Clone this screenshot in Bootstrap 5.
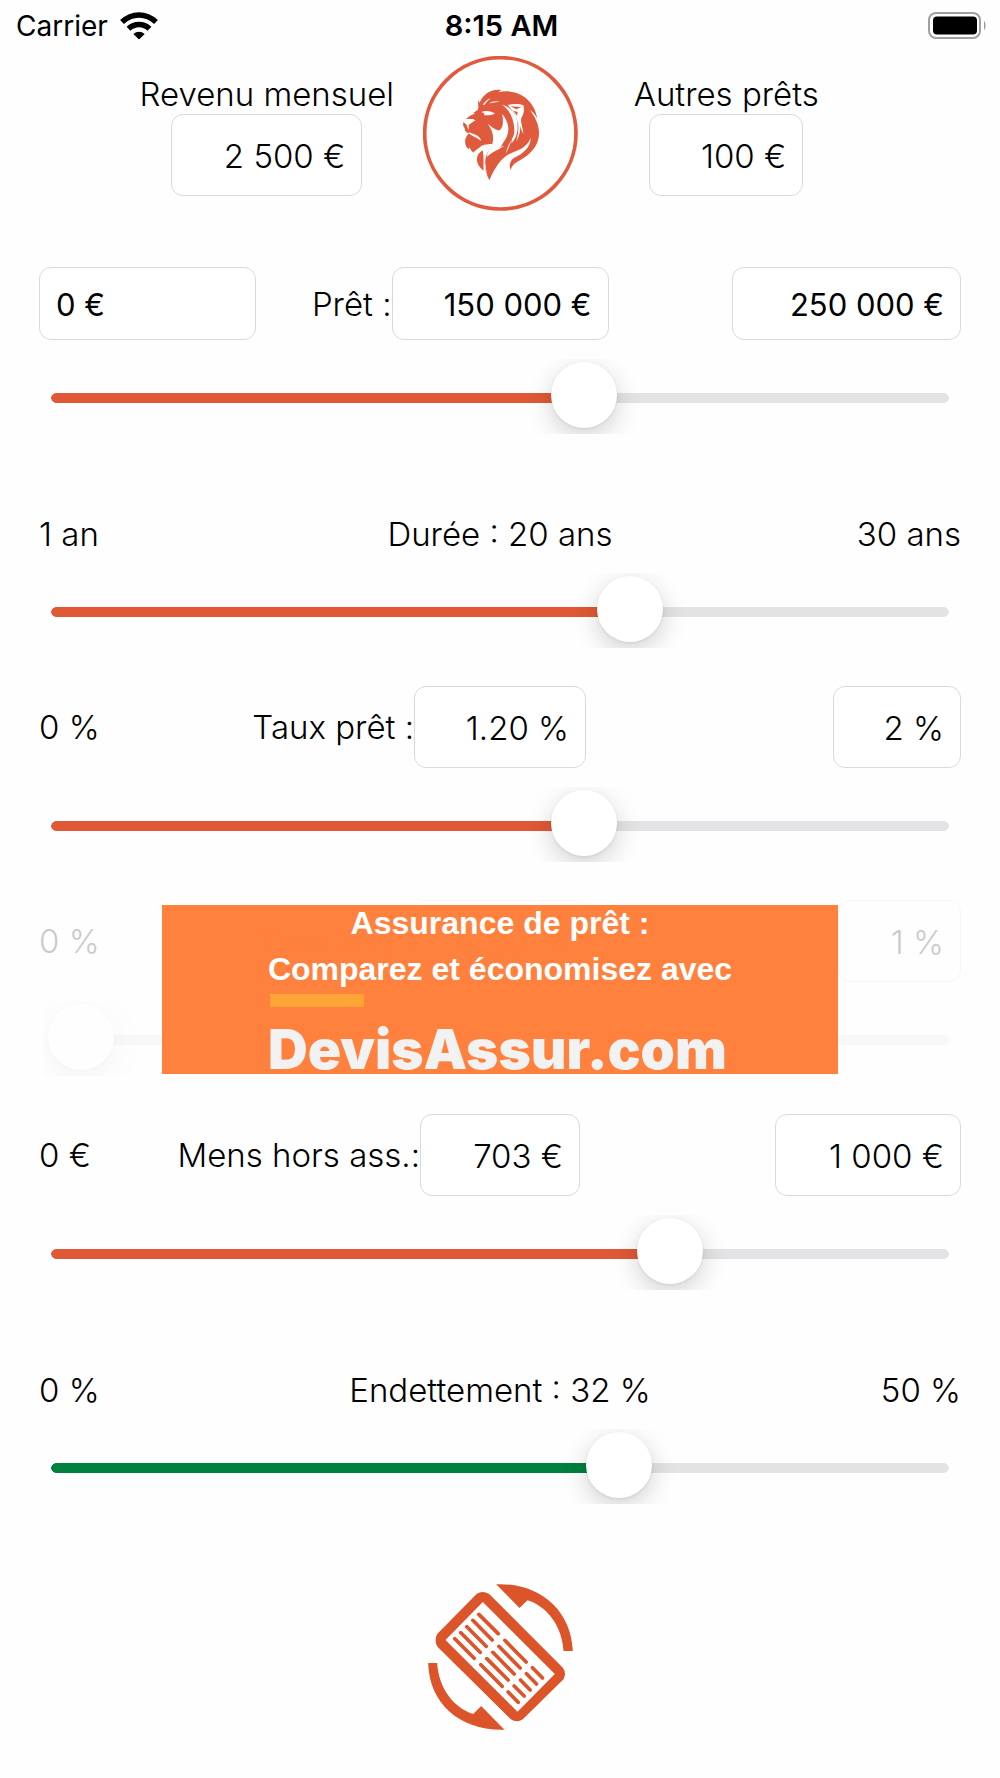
<!DOCTYPE html>
<html lang="fr">
<head>
<meta charset="utf-8">
<meta name="viewport" content="width=device-width, initial-scale=1">
<title>Simulateur de prêt</title>
<link href="https://cdn.jsdelivr.net/npm/bootstrap@5.3.0/dist/css/bootstrap.min.css" rel="stylesheet">
<style>
  :root { --brand: #e05835; --rail: #e3e3e5; }
  body { font-family: Inter, "Liberation Sans", sans-serif; font-size: 33px; font-weight: 300; line-height: 40px; color: #000; background: #fefefe; }
  .status-bar { height: 56px; padding: 6px 13px 10px 16px; font-size: 29px; font-weight: 400; }
  .status-bar time { font-weight: 600; }
  .carrier { font-size: 28px; }
  .three-cols { display: grid; grid-template-columns: 1fr auto 1fr; align-items: center; }
  .top-area { padding-bottom: 9px; }
  .income { padding: 2px 0 0 111px; }
  .others { padding: 2px 125px 0 0; }
  .money { height: 82px; padding: 2px 16px 0; border: 1px solid #dadada; border-radius: 12px; font-size: 33px; font-weight: 300; color: #000; background: #fff; text-align: right; }
  .money:disabled { background: #fff; color: #000; }
  .money-main { height: 73px; font-size: 31px; font-weight: 400; }
  .size-xs { width: 123px; } .size-s { width: 128px; } .size-m { width: 154px; } .size-l { width: 160px; }
  .size-xl { width: 172px; } .size-2xl { width: 186px; } .size-wide { width: 191px; } .size-3xl { width: 217px; } .size-4xl { width: 229px; }
  .setting { min-height: 214px; gap: 19px; }
  .setting .three-cols { padding: 0 39px; }
  .faded { opacity: .2; }
  .slide-box { height: 75px; margin: 0 44px; padding: 0 4px; overflow: hidden; }
  .slide { -webkit-appearance: none; appearance: none; display: block; width: 100%; height: 78px; margin: 0; background: transparent; --tint: var(--brand); }
  .slide-ok { --tint: #00813f; }
  .slide-zero { --tint: var(--rail); }
  .slide::-webkit-slider-runnable-track { height: 10px;
    background:
      linear-gradient(90deg, var(--tint) var(--fill), var(--rail) var(--fill)) 8px 0 / calc(100% - 16px) 10px no-repeat,
      radial-gradient(circle at center, var(--tint) 4.5px, transparent 5px) 3px 0 / 10px 10px no-repeat,
      radial-gradient(circle at center, var(--rail) 4.5px, transparent 5px) calc(100% - 3px) 0 / 10px 10px no-repeat; }
  .slide::-webkit-slider-thumb { -webkit-appearance: none; width: 66px; height: 66px; margin-top: -31px; border: 0; border-radius: 50%; background: #fff; box-shadow: 0 8px 26px rgba(0,0,0,.18), 0 1px 3px rgba(0,0,0,.08); }
  .ad { top: 43px; left: 50%; width: 676px; max-width: 100%; height: 169px; transform: translateX(-50%); background: rgba(255,127,58,.985); color: #fff; text-decoration: none; font: bold 32px/36px "Liberation Sans", Arial, sans-serif; overflow: hidden; }
  .ad:hover { color: #fff; }
  .ad-copy { width: 464px; }
  .ad-lines { gap: 10px; }
  .ad-bar { width: 94px; height: 13px; margin: 7px 0 0 2px; background: #ffa535; }
  .ad-name { font: 900 55px/50px Inter, sans-serif; color: #f2f2f2; margin-top: 17px; }
  .flip { margin-top: 80px; }
</style>
<script src="https://cdn.jsdelivr.net/npm/bootstrap@5.3.0/dist/js/bootstrap.bundle.min.js"></script>
</head>
<body>
<div class="status-bar three-cols">
  <div class="d-flex align-items-center gap-2">
    <span class="carrier">Carrier</span>
    <svg class="ms-1" width="38" height="28" viewBox="0 0 38 28" role="img" aria-label="Wi-Fi"><g fill="none" stroke="#000" stroke-width="5.500"><path d="M2 10C12 .500 26 .500 36 10"/><path d="M8.500 16.700C14.500 11 23.500 11 29.500 16.700"/></g><path d="M13.300 22Q19 17.500 24.700 22L19 27.500Z"/></svg>
  </div>
  <time datetime="08:15">8:15 AM</time>
  <svg class="ms-auto" width="60" height="28" viewBox="0 0 60 28" role="img" aria-label="Batterie pleine"><rect x="2" y="1" width="51" height="25" rx="7" fill="#fff" stroke="#a0a0a0" stroke-width="2"/><rect x="6" y="4.500" width="44" height="18" rx="4"/><path d="M57 8.500Q60 13.500 57 18.500Z" fill="#999"/></svg>
</div>

<header class="top-area three-cols">
  <div class="income d-flex flex-column align-items-center">
    <label for="income">Revenu mensuel</label>
    <input id="income" class="form-control money size-wide" value="2 500 €">
  </div>
  <svg width="155" height="155" viewBox="24 18 465 465" role="img" aria-label="Logo lion">
    <circle cx="256" cy="250" r="227" fill="#fff" stroke="#e05a3e" stroke-width="11"/>
    <path fill="#e05a3e" d="M190 174L189 150L194 158C205 132 228 116 259 120L250 127C305 114 357 145 367 206C360 192 353 185 345 181C361 202 373 225 372 252C371 290 344 315 310 334C298 341 291 347 287 360C281 346 285 331 298 323C325 310 347 292 347 263C337 290 316 298 291 308C260 320 240 352 223 391C208 363 204 334 217 309C224 297 228 287 232 282C216 282 199 285 193 293C183 299 177 303 176 308C168 302 166 298 164 292L161 298C150 289 148 274 153 262C156 256 160 253 162 250C150 247 149 239 149 234C144 230 143 221 146 216L149 219L158 225L163 214L174 212L178 207H153L164 198L181 190L174 189L188 180Z"/>
    <path fill="#e05a3e" d="M203 301C208 322 204 341 206 362C194 353 185 342 186 325C187 313 194 306 203 301Z"/>
    <g fill="#fff">
      <path d="M199 186C211 181 229 182 240 191C228 196 217 196 207 196C210 192 208 189 199 186Z"/>
      <path d="M203 164C211 154 217 148 227 144C219 153 213 157 208 165ZM222 160C232 153 242 152 256 155C243 156 232 158 222 160Z"/>
      <path d="M148 217L158 210L182 210L169 219L161 225L162 239C156 235 159 227 148 217Z"/>
      <path d="M161 247C174 252 195 256 199 273C187 263 171 259 161 250Z"/>
      <path d="M217 220C231 233 244 242 254 241C267 230 264 210 262 192C279 214 283 234 278 252C273 270 260 282 256 294C259 289 263 287 268 287C249 301 229 306 215 322C217 306 223 297 231 285C239 261 233 242 217 220Z"/>
      <path d="M261 164C284 169 303 190 307 216C311 246 302 266 289 280L292 264C285 284 279 297 273 311C278 276 298 270 298 240C297 207 285 180 261 164Z"/>
      <path d="M278 165C295 160 315 161 325 166C329 179 326 193 320 202C314 216 324 230 325 252C317 238 316 229 314 219C319 241 312 260 304 274C310 250 312 234 309 219C303 196 291 179 278 165Z"/>
      <path d="M209 300C214 292 220 288 228 284L233 285C219 299 210 314 211 339C212 355 214 363 218 377C207 351 206 324 209 300Z"/>
    </g>
    <path fill="#e05a3e" d="M286 169L319 171L304 178ZM295 182L308 186L306 197Z"/>
  </svg>
  <div class="others d-flex flex-column align-items-center">
    <label for="loans">Autres prêts</label>
    <input id="loans" class="form-control money size-m" value="100 €">
  </div>
</header>

<main>
  <section class="setting d-flex flex-column justify-content-end">
    <div class="three-cols">
      <div class="d-flex align-items-center justify-content-between"><input aria-label="Prêt minimum" class="form-control money money-main size-3xl text-start" value="0 €"><label for="loan">Prêt :</label></div>
      <input id="loan" class="form-control money money-main size-3xl" value="150 000 €">
      <input aria-label="Prêt maximum" class="form-control money money-main size-4xl ms-auto" value="250 000 €">
    </div>
    <div class="slide-box"><input type="range" class="slide" aria-label="Prêt" min="0" max="250000" value="150000" style="--fill:60%"></div>
  </section>

  <section class="setting d-flex flex-column justify-content-end">
    <div class="three-cols">
      <span>1 an</span>
      <label for="years">Durée : 20 ans</label>
      <span class="text-end">30 ans</span>
    </div>
    <div class="slide-box"><input id="years" type="range" class="slide" min="1" max="30" value="20" style="--fill:65.500%"></div>
  </section>

  <section class="setting d-flex flex-column justify-content-end">
    <div class="three-cols">
      <div class="d-flex justify-content-between"><span>0 %</span><label for="rate">Taux prêt :</label></div>
      <input id="rate" class="form-control money size-xl" value="1.20 %">
      <input aria-label="Taux maximum" class="form-control money size-s ms-auto" value="2 %">
    </div>
    <div class="slide-box"><input type="range" class="slide" aria-label="Taux prêt" min="0" max="2" step="0.01" value="1.2" style="--fill:60%"></div>
  </section>

  <section class="setting d-flex flex-column justify-content-end position-relative">
    <div class="three-cols faded">
      <div class="d-flex justify-content-between"><span>0 %</span><label for="ins">Taux Ass :</label></div>
      <input id="ins" class="form-control money size-xl" value="0.00 %" disabled>
      <input aria-label="Taux assurance maximum" class="form-control money size-xs ms-auto" value="1 %" disabled>
    </div>
    <div class="slide-box faded"><input type="range" class="slide slide-zero" aria-label="Taux assurance" min="0" max="1" step="0.01" value="0" disabled style="--fill:0%"></div>
    <a href="#" class="ad position-absolute d-flex justify-content-center">
      <div class="ad-copy">
        <div class="ad-lines d-flex flex-column align-items-center text-nowrap">
          <div>Assurance de prêt :</div>
          <div>Comparez et économisez avec</div>
        </div>
        <div class="ad-bar"></div>
        <div class="ad-name text-nowrap">DevisAssur.com</div>
      </div>
    </a>
  </section>

  <section class="setting d-flex flex-column justify-content-end">
    <div class="three-cols">
      <div class="d-flex justify-content-between"><span>0 €</span><label for="monthly">Mens hors ass.:</label></div>
      <input id="monthly" class="form-control money size-l" value="703 €">
      <input aria-label="Mensualité maximum" class="form-control money size-2xl ms-auto" value="1 000 €">
    </div>
    <div class="slide-box"><input type="range" class="slide" aria-label="Mensualité hors assurance" min="0" max="1000" value="703" style="--fill:70.300%"></div>
  </section>

  <section class="setting d-flex flex-column justify-content-end">
    <div class="three-cols">
      <span>0 %</span>
      <label for="debt">Endettement : 32 %</label>
      <span class="text-end">50 %</span>
    </div>
    <div class="slide-box"><input id="debt" type="range" class="slide slide-ok" min="0" max="50" step="0.1" value="32.1" style="--fill:64.200%"></div>
  </section>
</main>

<button type="button" class="flip btn d-block mx-auto p-0 border-0" aria-label="Tourner l'écran">
  <svg class="d-block" width="145" height="146" viewBox="54 42 434 438" fill="#dc5429">
    <path d="M258 43C386 38 483 118 488 243H460C456 168 410 109 352 91L328 114Z"/>
    <path d="M54 279H81C86 357 131 413 189 432L213 408L283 479C150 483 57 401 54 279Z"/>
    <path fill-rule="evenodd" d="M200 71Q218 61 237 72L458 293Q470 309 460 328L338 448Q320 460 302 448L82 230Q71 212 81 192ZM218 96L106 210L322 425L434 312Z"/>
    <path fill="none" stroke="#dc5429" stroke-width="11" stroke-linecap="round" d="M206 133L264 191M188 151L246 210M170 170L228 229M152 188L210 247M134 206L192 265M284 211L348 276M266 229L330 294M248 247L312 312M230 266L294 330M212 284L276 349M367 293L397 324M349 311L379 342M331 330L360 360M312 348L342 378M294 366L324 397"/>
  </svg>
</button>
</body>
</html>
